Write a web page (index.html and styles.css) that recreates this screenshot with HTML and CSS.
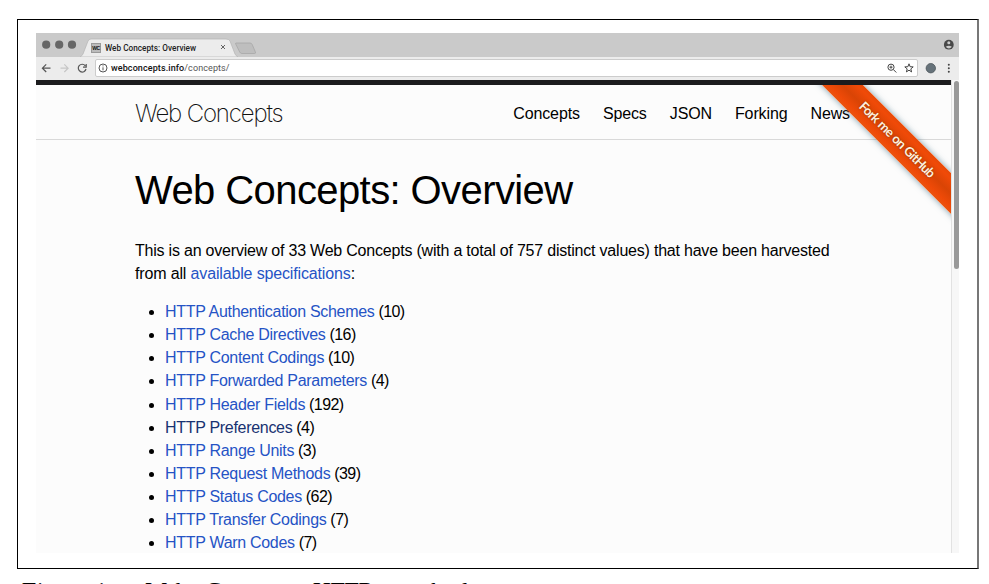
FILE: index.html
```html
<!DOCTYPE html>
<html lang="en">
<head>
<meta charset="utf-8">
<title>Web Concepts: Overview</title>
<link rel="stylesheet" href="styles.css">
</head>
<body>
<figure class="figure">
  <div class="frame">
    <div class="browser">
      <div class="tabs">
        <svg class="tabs-art" width="923" height="24" viewBox="0 0 923 24">
          <g fill="#666"><circle cx="10.2" cy="11.7" r="4.1"/><circle cx="23.2" cy="11.7" r="4.1"/><circle cx="36" cy="11.7" r="4.1"/></g>
          <path d="M44 24 Q46 23 47 21 L52 8 Q53 6 55 6 H190 Q193 6 194 8 L199 21 Q200 23 202 24Z" fill="#ececec" stroke="#b5b5b5" stroke-width=".7"/>
          <path d="M200 10h14q1.500 0 2.200 1.500l3.200 7.500q.6 1.500-1 1.500h-12.500q-1.500 0-2.200-1.500l-4-8q-.5-1 .3-1z" fill="#bebebe" stroke="#a4a4a4" stroke-width=".7"/>
          <path d="m185 12 4 4m0-4-4 4" stroke="#555" stroke-width=".9"/>
          <circle cx="912.800" cy="11.700" r="4.900" fill="#484848"/><circle cx="912.800" cy="9.800" r="1.500" fill="#cacaca"/><path d="M909.700 13.800q3.100-2.200 6.200 0-3 3.200-6.200 0z" fill="#cacaca"/>
        </svg>
        <span class="favicon">WC</span><span class="tab-title">Web Concepts: Overview</span>
      </div>
      <div class="toolbar">
        <svg width="59" height="22" viewBox="0 0 59 22" fill="none" stroke-width="1.200">
          <path d="M14.500 11.200H6.500m3.700-3.800-3.800 3.800 3.800 3.800" stroke="#555"/>
          <path d="M24.500 11.200h7.500m-3.700-3.800 3.800 3.800-3.800 3.800" stroke="#c6c6c6"/>
          <path d="M49.300 8.800A3.900 3.900 0 1 0 50 12M50.200 7v3.200H47" stroke="#555"/>
        </svg>
        <div class="address">
          <svg width="15" height="16" viewBox="0 0 15 16"><circle cx="7" cy="8" r="4" fill="none" stroke="#555"/><path d="M7 7.300v3M7 5.400v1" stroke="#555"/></svg>
          <span class="url"><b>webconcepts.info</b>/concepts/</span>
          <svg class="address-icons" width="34" height="16" viewBox="0 0 34 16" fill="none" stroke="#444" stroke-width="1"><circle cx="8" cy="7.200" r="3.100"/><path d="m10.300 9.500 3 3M6.500 7.200h3M8 5.700v3M26 3.800l1.100 2.900 3.100.2-2.400 2 .8 3-2.600-1.700-2.600 1.700.8-3-2.400-2 3.100-.2z"/></svg>
        </div>
        <svg width="41" height="22" viewBox="0 0 41 22"><circle cx="12.800" cy="11.200" r="4.700" fill="#66727a" stroke="#4c555b" stroke-width=".8"/><g fill="#444"><circle cx="30.800" cy="7.700" r="1"/><circle cx="30.800" cy="11.200" r="1"/><circle cx="30.800" cy="14.700" r="1"/></g></svg>
      </div>
      <div class="viewport">
        <div class="page">
          <header class="site-header">
            <span class="logo">Web Concepts</span>
            <nav class="nav"><a>Concepts</a><a>Specs</a><a>JSON</a><a>Forking</a><a>News</a></nav>
          </header>
          <main class="content">
            <h1>Web Concepts: Overview</h1>
            <p>This is an overview of 33 Web Concepts (with a total of 757 distinct values) that have been harvested<br><span class="last-line">from all <a>available specifications</a>:</span></p>
            <ul>
              <li><a>HTTP Authentication Schemes</a> (10)</li>
              <li><a>HTTP Cache Directives</a> (16)</li>
              <li><a>HTTP Content Codings</a> (10)</li>
              <li><a>HTTP Forwarded Parameters</a> (4)</li>
              <li><a>HTTP Header Fields</a> (192)</li>
              <li><a class="hover">HTTP Preferences</a> (4)</li>
              <li><a>HTTP Range Units</a> (3)</li>
              <li><a>HTTP Request Methods</a> (39)</li>
              <li><a>HTTP Status Codes</a> (62)</li>
              <li><a>HTTP Transfer Codings</a> (7)</li>
              <li><a>HTTP Warn Codes</a> (7)</li>
            </ul>
          </main>
          <div class="ribbon-clip"><div class="ribbon"><span>Fork me on GitHub</span></div></div>
        </div>
        <div class="scrollbar"><div class="thumb"></div></div>
      </div>
    </div>
  </div>
  <figcaption><span>Figure 1:</span><span>Web</span><span>Concepts:</span><span>HTTP</span><span>methods</span></figcaption>
</figure>
</body>
</html>
```
FILE: styles.css
```css
* { box-sizing: border-box; }
body { margin: 0; width: 989px; height: 584px; overflow: hidden; background: #fff; font-family: "Liberation Sans", sans-serif; }
.figure { margin: 19px 0 0 17px; }
.frame { width: 962px; height: 550px; padding: 13px 18px; border: 1px solid #000; border-right: 2px solid #777; }
.browser { width: 923px; height: 520px; background: #fcfcfc; overflow: hidden; }
.tabs { height: 24px; background: #cacaca; position: relative; display: flex; align-items: center; padding: 5px 0 0 55px; }
.tabs-art { position: absolute; left: 0; top: 0; }
.favicon { position: relative; width: 10px; height: 10px; border: 1px solid #999; background: #bbb; color: #111; font: bold 5px/8px "Liberation Sans", sans-serif; letter-spacing: -.3px; text-align: center; margin-right: 4px; }
.tab-title { position: relative; font: 500 8.200px/12px Roboto, sans-serif; letter-spacing: .02px; color: #222; }
.toolbar { height: 23px; background: #ececec; display: flex; }
.toolbar svg { display: block; flex: none; }
.address { flex: 1; height: 18px; margin-top: 2px; display: flex; align-items: center; background: #fff; border: 1px solid #ccc; border-radius: 2px; }
.url { font: 9px/14px Roboto, sans-serif; letter-spacing: .1px; color: #555; white-space: nowrap; }
.url b { font-weight: 500; color: #111; }
.address-icons { margin-left: auto; }
.viewport { height: 473px; display: flex; }
.page { position: relative; width: 915px; border-top: 5px solid #1c1c1e; background: #fcfcfc; overflow: hidden; }
.site-header { height: 55px; border-bottom: 1px solid #d9d9d9; padding: 3px 101px 0 99px; display: flex; justify-content: space-between; align-items: center; }
.logo { font: 200 24px/30px Inter, sans-serif; letter-spacing: -1.150px; color: #111; white-space: nowrap; }
.nav { display: flex; gap: 23px; font-size: 16px; line-height: 24px; letter-spacing: -.12px; color: #000; }
.content { padding: 27px 0 0 99px; font-size: 16px; line-height: 23.100px; color: #000; }
h1 { margin: 0 0 26px; font-size: 40px; line-height: 46px; font-weight: 400; letter-spacing: -.59px; color: #000; }
p { margin: 0; white-space: nowrap; letter-spacing: -.21px; }
.last-line { letter-spacing: -.15px; }
.content a { color: #2553c5; }
.content a.hover { color: #183271; }
ul { margin: 15px 0 0; padding: 0 0 0 30px; }
li { letter-spacing: -.55px; }
li a { letter-spacing: -.3px; }
.scrollbar { width: 8px; padding: 1px 1px 0 2px; background: #f7f7f7; border-left: 1px solid #e2e2e2; }
.thumb { height: 188px; width: 5px; border-radius: 3px; background: #999; }
.ribbon-clip { position: absolute; right: 0; top: 0; width: 140px; height: 140px; overflow: hidden; }
.ribbon { position: absolute; width: 220px; height: 29px; left: -24.500px; top: 40px; transform: rotate(45deg); background: linear-gradient(#e64a08, #f04a08 15%, #d94405 50%, #f04a08 85%, #e85510); box-shadow: 0 0 6px #406f85b0; text-align: center; }
.ribbon span { font: 700 13px/28px Lato, sans-serif; letter-spacing: -.75px; word-spacing: 1px; color: #ffeedd; text-shadow: 0 0 2px #803000; white-space: nowrap; }
figcaption { display: grid; grid-template-columns: 124px 59px 108px 82px auto; margin: 9px 0 0 3px; font: italic 25px/28px "Liberation Serif", serif; white-space: nowrap; }
```
